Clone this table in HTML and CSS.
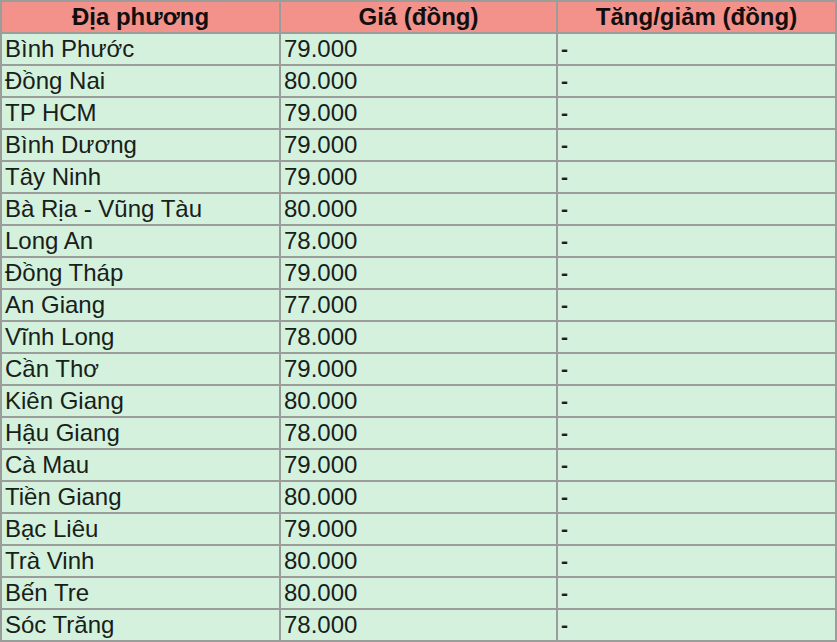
FILE: index.html
```html
<!DOCTYPE html>
<html lang="vi">
<head>
<meta charset="utf-8">
<link rel="stylesheet" href="styles.css">
</head>
<body>
<table class="price-table">
<thead>
<tr><th class="c1">Địa phương</th><th class="c2">Giá (đồng)</th><th class="c3">Tăng/giảm (đồng)</th></tr>
</thead>
<tbody>
<tr><td>Bình Phước</td><td>79.000</td><td class="dash">-</td></tr>
<tr><td>Đồng Nai</td><td>80.000</td><td class="dash">-</td></tr>
<tr><td>TP HCM</td><td>79.000</td><td class="dash">-</td></tr>
<tr><td>Bình Dương</td><td>79.000</td><td class="dash">-</td></tr>
<tr><td>Tây Ninh</td><td>79.000</td><td class="dash">-</td></tr>
<tr><td>Bà Rịa - Vũng Tàu</td><td>80.000</td><td class="dash">-</td></tr>
<tr><td>Long An</td><td>78.000</td><td class="dash">-</td></tr>
<tr><td>Đồng Tháp</td><td>79.000</td><td class="dash">-</td></tr>
<tr><td>An Giang</td><td>77.000</td><td class="dash">-</td></tr>
<tr><td>Vĩnh Long</td><td>78.000</td><td class="dash">-</td></tr>
<tr><td>Cần Thơ</td><td>79.000</td><td class="dash">-</td></tr>
<tr><td>Kiên Giang</td><td>80.000</td><td class="dash">-</td></tr>
<tr><td>Hậu Giang</td><td>78.000</td><td class="dash">-</td></tr>
<tr><td>Cà Mau</td><td>79.000</td><td class="dash">-</td></tr>
<tr><td>Tiền Giang</td><td>80.000</td><td class="dash">-</td></tr>
<tr><td>Bạc Liêu</td><td>79.000</td><td class="dash">-</td></tr>
<tr><td>Trà Vinh</td><td>80.000</td><td class="dash">-</td></tr>
<tr><td>Bến Tre</td><td>80.000</td><td class="dash">-</td></tr>
<tr><td>Sóc Trăng</td><td>78.000</td><td class="dash">-</td></tr>
</tbody>
</table>
</body>
</html>
```
FILE: styles.css
```css
html, body {
  margin: 0;
  padding: 0;
  background: #ffffff;
}
.price-table {
  border-collapse: collapse;
  width: 835px;
  table-layout: fixed;
  font-family: "Liberation Sans", Arial, sans-serif;
  font-size: 24px;
  color: #18201a;
}
.price-table th,
.price-table td {
  border: 2px solid #9b9d9b;
  height: 30px;
  padding: 0 3px;
  box-sizing: border-box;
  line-height: 30px;
  white-space: nowrap;
  overflow: hidden;
}
.price-table th {
  background: #f3928a;
  font-weight: bold;
  text-align: center;
  color: #120e0e;
}
.price-table td {
  background: #d3f1dc;
  text-align: left;
}
.c1 { width: 279px; }
.c2 { width: 277px; }
.c3 { width: 279px; }
.price-table td.dash {
  font-size: 21px;
  font-weight: bold;
  padding-left: 3px;
}
```
